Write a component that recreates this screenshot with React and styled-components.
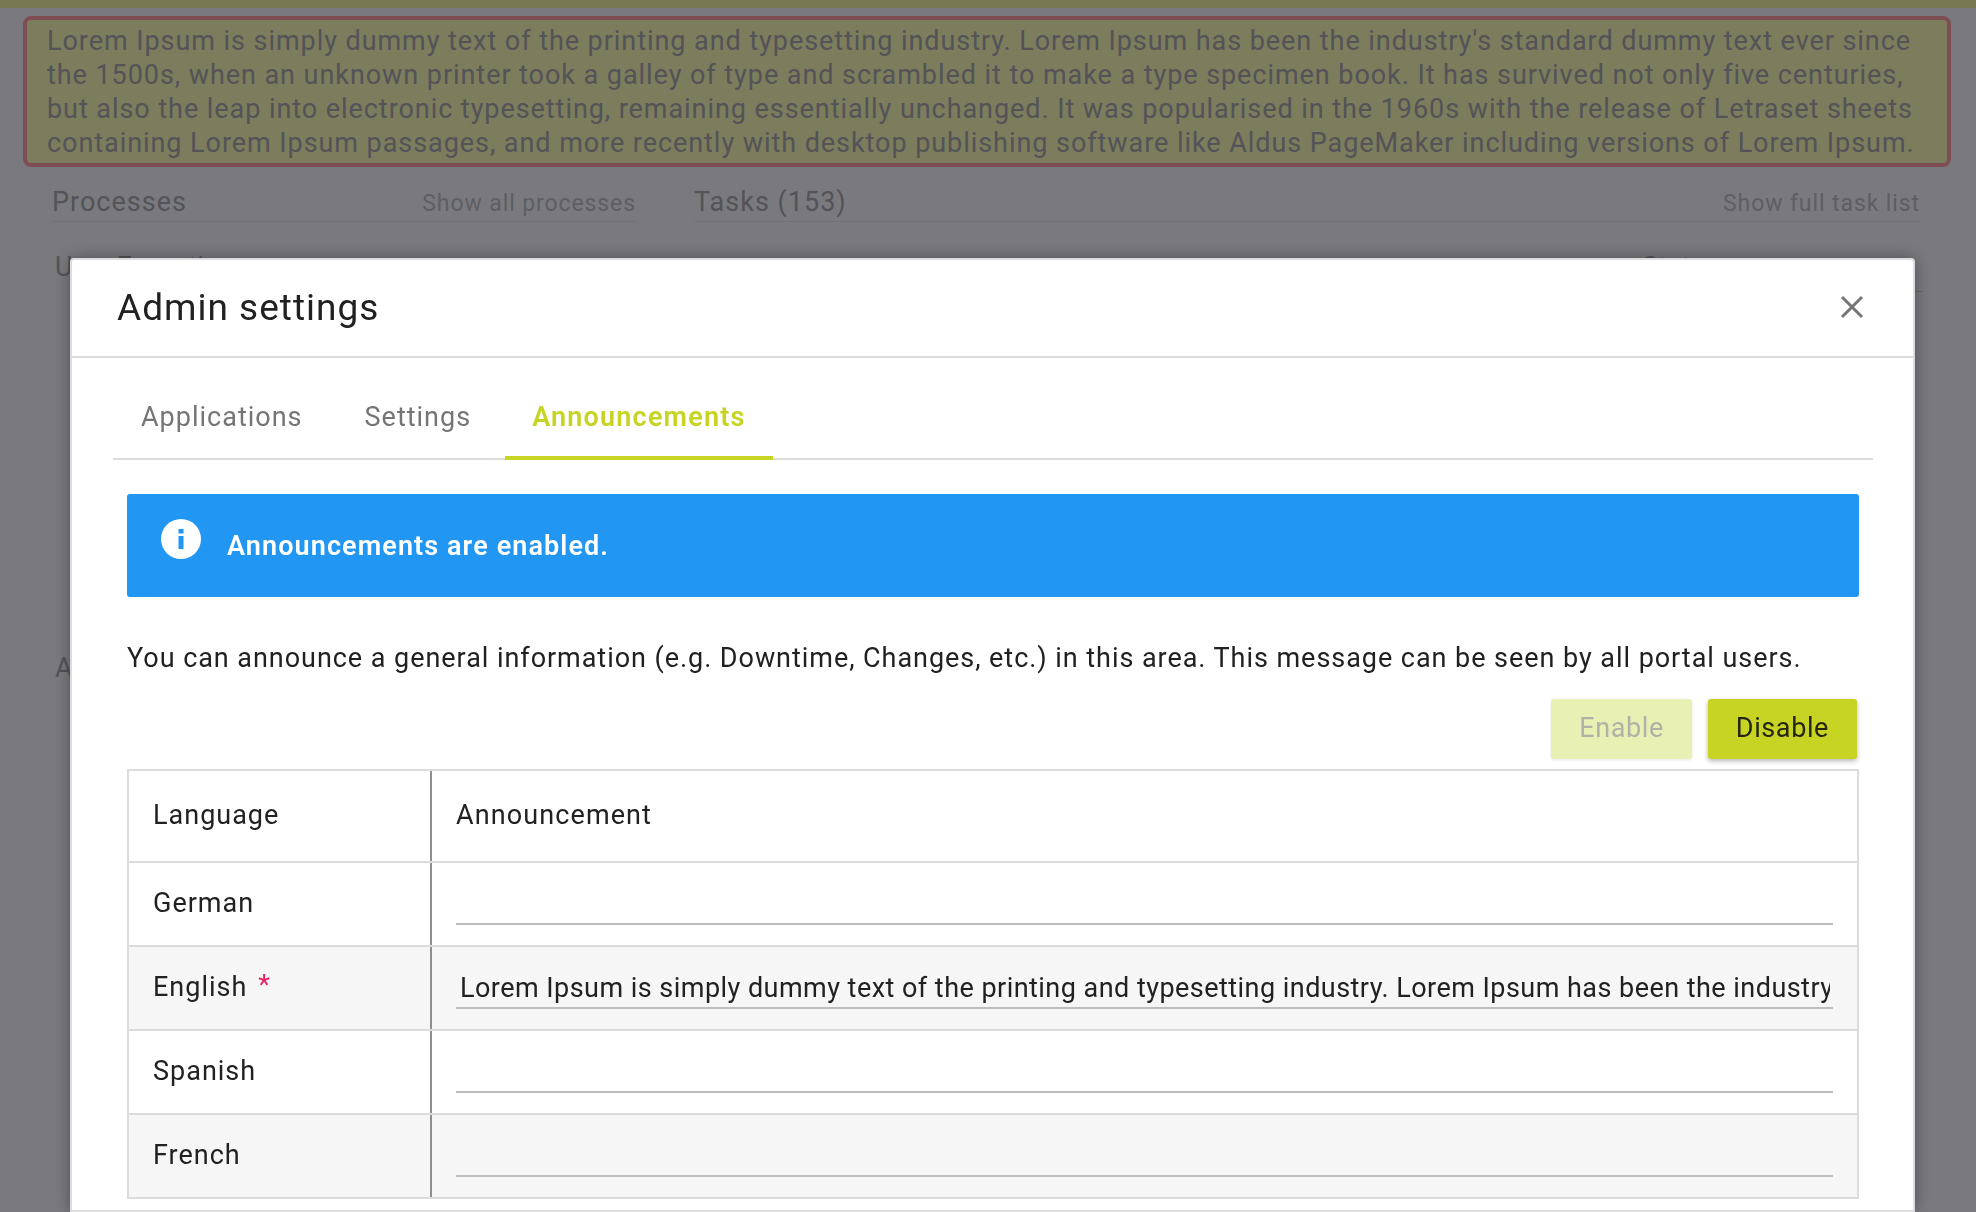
import React from 'react'
import styled, {createGlobalStyle} from 'styled-components'

const lorem = "Lorem Ipsum is simply dummy text of the printing and typesetting industry. Lorem Ipsum has been the industry's standard dummy text ever since the 1500s, when an unknown printer took a galley of type and scrambled it to make a type specimen book. It has survived not only five centuries, but also the leap into electronic typesetting, remaining essentially unchanged. It was popularised in the 1960s with the release of Letraset sheets containing Lorem Ipsum passages, and more recently with desktop publishing software like Aldus PageMaker including versions of Lorem Ipsum."

const languages = [
  {name: 'German', value: ''},
  {name: 'English', value: lorem, required: true, shaded: true},
  {name: 'Spanish', value: ''},
  {name: 'French', value: '', shaded: true},
]

const GlobalStyle = createGlobalStyle`
  html, body {
    margin: 0;
    height: 100%;
    overflow: hidden;
    background: #f4f4fc;
  }
  body {
    font-family: Roboto, "Liberation Sans", sans-serif;
    color: #212121;
  }
`

const Page = styled.div`
  height: 1212px;
  overflow: hidden;
  background: #f4f4fc;
`

const TopBar = styled.div`
  height: 8px;
  background: #ecf0a4;
`

const Banner = styled.div`
  margin: 8px 25px 0 23px;
  padding: 4px 20px 0;
  height: 151px;
  box-sizing: border-box;
  border: 4px solid #ff9ca8;
  border-radius: 8px;
  background: #f8fab8;
  color: #a6a6b0;
  font-size: 27px;
  line-height: 34px;
  letter-spacing: 0.94px;
`

const Columns = styled.div`
  display: flex;
  gap: 58px;
  padding: 17px 56px 0 52px;
`

const Column = styled.section`
  flex: ${props => props.$grow};
  min-width: 0;
`

const SectionHead = styled.div`
  display: flex;
  justify-content: space-between;
  align-items: center;
  height: 35px;
  padding-bottom: 2px;
  border-bottom: 1px solid #e4e4ea;
  color: #a6a6b0;
  font-size: 27px;
  letter-spacing: 1px;
`

const SectionLink = styled.span`
  margin-top: 3px;
  font-size: 23px;
  letter-spacing: 0.9px;
  color: #bcbcc8;
`

const SubHead = styled.div`
  margin: ${props => props.$gap}px 0 0 3px;
  color: #a6a6b0;
  font-size: 27px;
`

const TaskHead = styled.div`
  margin: 29px -2px 0 0;
  padding: 0 0 8px 948px;
  border-bottom: 1px solid #c8c8d0;
  color: #a6a6b0;
  font-size: 27px;
`

const Backdrop = styled.div`
  position: fixed;
  inset: 0;
  background: rgba(0, 0, 0, 0.5);
`

const Modal = styled.div`
  position: fixed;
  left: 70px;
  top: 258px;
  width: 1845px;
  height: 954px;
  box-sizing: border-box;
  background: #fff;
  border: 2px solid #dcdcdc;
  border-radius: 4px 4px 0 0;
  box-shadow: 0 0 16px rgba(0, 0, 0, 0.35);
`

const ModalHeader = styled.div`
  display: flex;
  justify-content: space-between;
  align-items: center;
  height: 94px;
  padding: 0 49px 2px 45px;
  border-bottom: 2px solid #dcdcdc;
`

const ModalTitle = styled.h2`
  margin: 0;
  font-size: 37px;
  font-weight: 400;
  letter-spacing: 1px;
`

const CloseButton = styled.button`
  display: flex;
  padding: 0;
  border: 0;
  background: none;
  color: #757575;
`

const ModalBody = styled.div`
  padding: 0 40px 0 41px;
`

const Tabs = styled.div`
  display: flex;
  height: 100px;
  border-bottom: 2px solid #dcdcdc;
`

const Tab = styled.div`
  display: flex;
  align-items: center;
  box-sizing: border-box;
  height: 102px;
  padding: 19px ${props => props.$pad}px 0;
  font-size: 27px;
  letter-spacing: ${props => props.$active ? 1.2 : 1}px;
  font-weight: ${props => props.$active ? 600 : 400};
  color: ${props => props.$active ? '#c6d423' : '#757575'};
  border-bottom: 4px solid ${props => props.$active ? '#c6d423' : 'transparent'};
`

const Content = styled.div`
  padding: 34px 14px 0;
`

const Alert = styled.div`
  display: flex;
  align-items: center;
  gap: 26px;
  height: 103px;
  padding: 0 34px;
  box-sizing: border-box;
  border-radius: 3px;
  background: #2196f3;
  color: #fff;
  font-size: 27px;
  font-weight: 600;
  letter-spacing: 1.1px;
`

const AlertIcon = styled.svg`
  margin-top: -14px;
`

const Intro = styled.p`
  margin: 43px 0 0;
  font-size: 27px;
  line-height: 36px;
  letter-spacing: 0.95px;
`

const Actions = styled.div`
  display: flex;
  justify-content: flex-end;
  gap: 16px;
  margin: 23px 2px 10px 0;
`

const ActionButton = styled.button`
  height: 60px;
  padding: 0 ${props => props.$pad}px 2px;
  border: 0;
  border-radius: 3px;
  font-family: inherit;
  font-size: 27px;
  letter-spacing: 0.6px;
  background: ${props => props.disabled ? '#e9f0b4' : '#c8d423'};
  color: ${props => props.disabled ? '#b0b2a8' : '#24260f'};
  box-shadow: ${props => props.disabled ? '0 1px 3px rgba(0,0,0,.1)' : '0 2px 5px rgba(0,0,0,.3)'};
`

const Table = styled.div`
  border: 2px solid #dcdcdc;
`

const Row = styled.div`
  display: grid;
  grid-template-columns: 303px 1fr;
  height: ${props => props.$height}px;
  box-sizing: border-box;
  background: ${props => props.$shaded ? '#f6f6f6' : '#fff'};
  border-bottom: ${props => props.$last ? '0' : '2px solid #dcdcdc'};
`

const LabelCell = styled.div`
  display: flex;
  align-items: center;
  gap: 11px;
  padding: 0 0 ${props => props.$lift}px 24px;
  border-right: 2px solid #8e8e8e;
  font-size: 27px;
  letter-spacing: 1px;
`

const Required = styled.span`
  color: #e91e63;
  margin-top: -4px;
`

const ValueCell = styled.div`
  display: flex;
  align-items: ${props => props.$center ? 'center' : 'flex-start'};
  padding: 0 24px ${props => props.$center ? 2 : 0}px;
  font-size: 27px;
  letter-spacing: 1.1px;
`

const AnnouncementInput = styled.input`
  display: block;
  width: 100%;
  height: 40px;
  margin-top: 22px;
  padding: 0 3px 0 4px;
  box-sizing: border-box;
  border: 0;
  border-bottom: 2px solid #bdbdbd;
  outline: 0;
  background: transparent;
  font-family: inherit;
  font-size: 27px;
  letter-spacing: 0.46px;
  color: #212121;
`

export default function App() {
  return (
    <Page>
      <GlobalStyle />
      <TopBar />
      <Banner>{lorem}</Banner>
      <Columns>
        <Column $grow={584}>
          <SectionHead>Processes<SectionLink>Show all processes</SectionLink></SectionHead>
          <SubHead $gap={29}>User Executions</SubHead>
          <SubHead $gap={369}>Apps</SubHead>
        </Column>
        <Column $grow={1226}>
          <SectionHead>Tasks (153)<SectionLink>Show full task list</SectionLink></SectionHead>
          <TaskHead>Status</TaskHead>
        </Column>
      </Columns>
      <Backdrop />
      <Modal>
        <ModalHeader>
          <ModalTitle>Admin settings</ModalTitle>
          <CloseButton aria-label="Close">
            <svg width="24" height="24" viewBox="0 0 24 24">
              <path d="M2 2 L22 22 M22 2 L2 22" stroke="currentColor" strokeWidth="3" fill="none" />
            </svg>
          </CloseButton>
        </ModalHeader>
        <ModalBody>
          <Tabs>
            <Tab $pad={28}>Applications</Tab>
            <Tab $pad={34}>Settings</Tab>
            <Tab $pad={27} $active>Announcements</Tab>
          </Tabs>
          <Content>
            <Alert>
              <AlertIcon width="40" height="40" viewBox="0 0 40 40">
                <circle cx="20" cy="20" r="20" fill="#fff" />
                <rect x="17.5" y="10" width="5" height="4.5" fill="#2196f3" />
                <rect x="17.5" y="17" width="5" height="13" fill="#2196f3" />
              </AlertIcon>
              Announcements are enabled.
            </Alert>
            <Intro>You can announce a general information (e.g. Downtime, Changes, etc.) in this area. This message can be seen by all portal users.</Intro>
            <Actions>
              <ActionButton $pad={28} disabled>Enable</ActionButton>
              <ActionButton $pad={28}>Disable</ActionButton>
            </Actions>
            <Table>
              <Row $height={92}>
                <LabelCell $lift={2}>Language</LabelCell>
                <ValueCell $center>Announcement</ValueCell>
              </Row>
              {languages.map((lang, i) =>
                <Row
                  key={lang.name}
                  $height={i === languages.length - 1 ? 82 : 84}
                  $shaded={lang.shaded}
                  $last={i === languages.length - 1}
                >
                  <LabelCell $lift={2}>
                    {lang.name}
                    {lang.required ? <Required>*</Required> : null}
                  </LabelCell>
                  <ValueCell>
                    <AnnouncementInput readOnly value={lang.value} />
                  </ValueCell>
                </Row>
              )}
            </Table>
          </Content>
        </ModalBody>
      </Modal>
    </Page>
  )
}
